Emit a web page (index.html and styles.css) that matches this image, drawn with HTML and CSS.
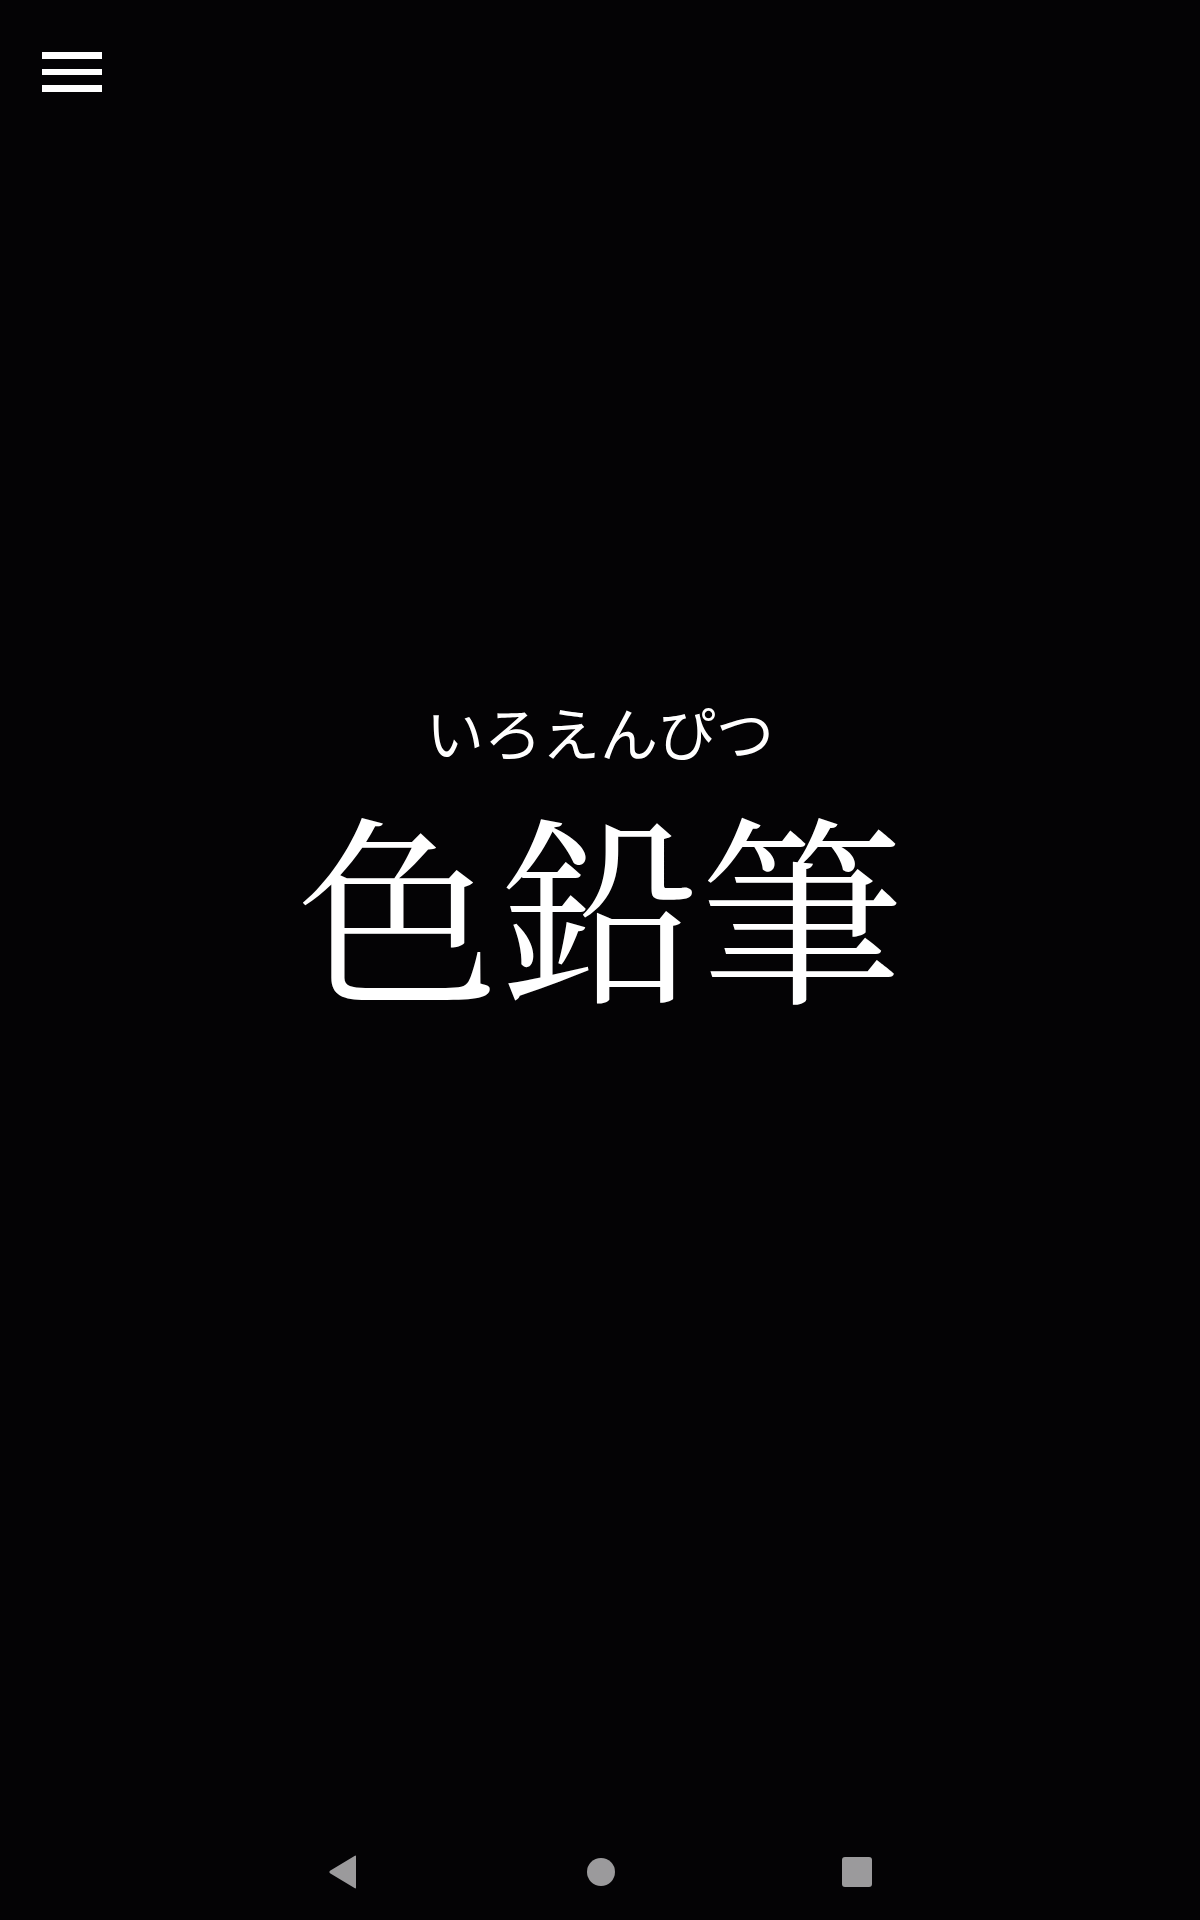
FILE: index.html
```html
<!DOCTYPE html>
<html lang="ja">
<head>
<meta charset="utf-8">
<title>色鉛筆</title>
<link rel="stylesheet" href="styles.css">
</head>
<body>
<div class="screen">
  <header class="topbar">
    <button class="menu" aria-label="menu">
      <span class="bar"></span>
      <span class="bar"></span>
      <span class="bar"></span>
    </button>
  </header>
  <main class="card">
    <div class="reading">いろえんぴつ</div>
    <div class="word" lang="zh-CN">色鉛筆</div>
  </main>
  <nav class="navbar">
    <svg class="nav-icon" width="30" height="34" viewBox="0 0 30 34"><path d="M28 1.5 L28 32.5 Q28 34 26.5 33 L2 18.2 Q0.5 17 2 15.8 L26.5 1 Q28 0 28 1.5 Z" fill="#9b9a9c"/></svg>
    <span class="home"></span>
    <span class="recent"></span>
  </nav>
</div>
</body>
</html>
```

FILE: styles.css
```css
html, body {
  margin: 0;
  padding: 0;
  background: #040305;
}
.screen {
  width: 1200px;
  height: 1920px;
  display: flex;
  flex-direction: column;
  background: #040305;
  color: #ffffff;
}
.topbar {
  height: 140px;
  padding: 52px 0 0 42px;
  box-sizing: border-box;
}
.menu {
  display: flex;
  flex-direction: column;
  gap: 9.8px;
  padding: 0;
  margin: 0;
  border: 0;
  background: none;
}
.bar {
  display: block;
  width: 60px;
  height: 6.8px;
  background: #ffffff;
}
.card {
  flex: 1;
  display: flex;
  flex-direction: column;
  align-items: center;
  padding-top: 562px;
  box-sizing: border-box;
}
.reading {
  font-family: "Noto Sans CJK JP", sans-serif;
  font-weight: 400;
  font-size: 58px;
  line-height: 58px;
  letter-spacing: 0;
}
.word {
  font-family: "Noto Serif CJK SC", "Noto Serif CJK JP", serif;
  font-size: 202px;
  line-height: 202px;
  margin-top: 41px;
}
.navbar {
  height: 96px;
  display: flex;
  align-items: center;
  justify-content: center;
  gap: 0;
}
.nav-icon {
  width: 30px;
  height: 34px;
  margin-right: 229px;
}
.home {
  width: 28px;
  height: 28px;
  border-radius: 50%;
  background: #9b9a9c;
  margin-right: 227px;
}
.recent {
  width: 30px;
  height: 30px;
  border-radius: 3px;
  background: #9b9a9c;
}
```
